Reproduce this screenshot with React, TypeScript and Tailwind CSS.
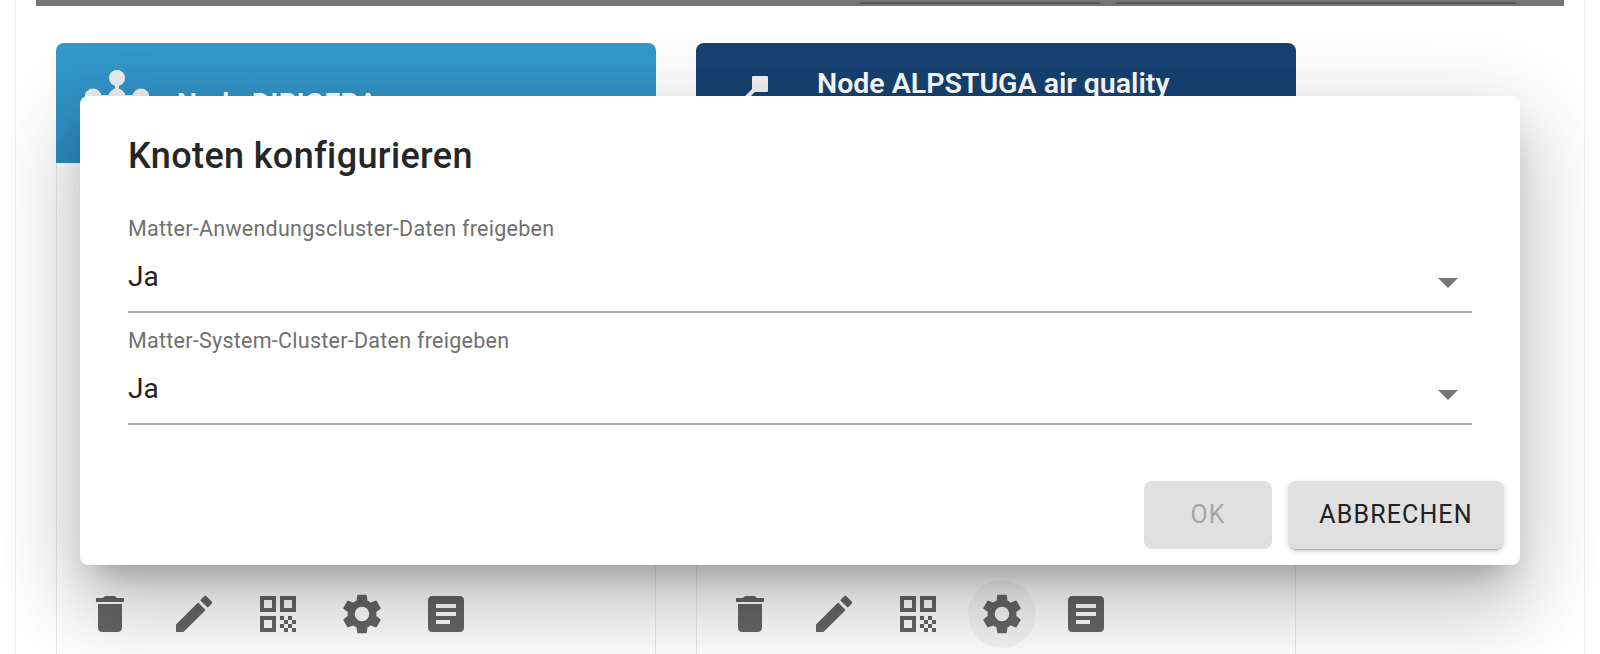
const ICONS = {
  trash: "M6 19c0 1.1.9 2 2 2h8c1.1 0 2-.9 2-2V7H6v12zM19 4h-3.5l-1-1h-5l-1 1H5v2h14V4z",
  pencil:
    "M3 17.25V21h3.75L17.81 9.94l-3.75-3.75L3 17.25zM20.71 7.04c.39-.39.39-1.02 0-1.41l-2.34-2.34a.9959.9959 0 0 0-1.41 0l-1.83 1.83 3.75 3.75 1.83-1.83z",
  qr: "M3 11h8V3H3v8zm2-6h4v4H5V5zM3 21h8v-8H3v8zm2-6h4v4H5v-4zM13 3v8h8V3h-8zm6 6h-4V5h4v4zM13 13h2v2h-2zM15 15h2v2h-2zM13 17h2v2h-2zM15 19h2v2h-2zM17 17h2v2h-2zM19 19h2v2h-2zM17 13h2v2h-2zM19 15h2v2h-2z",
  gear: "M19.14 12.94c.04-.3.06-.61.06-.94 0-.32-.02-.64-.07-.94l2.03-1.58c.18-.14.23-.41.12-.61l-1.92-3.32c-.12-.22-.37-.29-.59-.22l-2.39.96c-.5-.38-1.03-.7-1.62-.94l-.36-2.54c-.04-.24-.24-.41-.48-.41h-3.84c-.24 0-.43.17-.47.41l-.36 2.54c-.59.24-1.13.57-1.62.94l-2.39-.96c-.22-.08-.47 0-.59.22L2.74 8.87c-.12.21-.08.47.12.61l2.03 1.58c-.05.3-.09.63-.09.94s.02.64.07.94l-2.03 1.58c-.18.14-.23.41-.12.61l1.92 3.32c.12.22.37.29.59.22l2.39-.96c.5.38 1.03.7 1.62.94l.36 2.54c.05.24.24.41.48.41h3.84c.24 0 .44-.17.47-.41l.36-2.54c.59-.24 1.13-.56 1.62-.94l2.39.96c.22.08.47 0 .59-.22l1.92-3.32c.12-.22.07-.47-.12-.61l-2.01-1.58zM12 15.6c-1.98 0-3.6-1.62-3.6-3.6s1.62-3.6 3.6-3.6 3.6 1.62 3.6 3.6-1.62 3.6-3.6 3.6z",
  article:
    "M19 3H5c-1.1 0-2 .9-2 2v14c0 1.1.9 2 2 2h14c1.1 0 2-.9 2-2V5c0-1.1-.9-2-2-2zm-5 14H7v-2h7v2zm3-4H7v-2h10v2zm0-4H7V7h10v2z",
};

function ActionIcon({ d, active }: { d: string; active?: boolean }) {
  return (
    <div
      className={
        "flex h-[68px] w-[68px] items-center justify-center rounded-full " +
        (active ? "bg-black/[0.04]" : "")
      }
    >
      <svg viewBox="0 0 24 24" className="h-12 w-12 fill-[#666666]">
        <path d={d} />
      </svg>
    </div>
  );
}

function NodeCard({
  title,
  header,
  titleTop,
  icon,
  activeGear,
}: {
  title: string;
  header: string;
  titleTop: string;
  icon: React.ReactNode;
  activeGear?: boolean;
}) {
  return (
    <div className="flex h-[640px] w-[600px] shrink-0 flex-col rounded-lg border border-[#e8e8e8] bg-white">
      <div className={"-mx-px -mt-px flex h-[120px] gap-7 rounded-t-lg pl-[29px] pt-5 " + header}>
        <div className="h-16 w-16 shrink-0">{icon}</div>
        <div className={"text-[28.5px] font-semibold leading-8 text-white " + titleTop}>{title}</div>
      </div>
      <div className="flex-1" />
      <div className="flex gap-4 pb-[34px] pl-[19px]">
        <ActionIcon d={ICONS.trash} />
        <ActionIcon d={ICONS.pencil} />
        <ActionIcon d={ICONS.qr} />
        <ActionIcon d={ICONS.gear} active={activeGear} />
        <ActionIcon d={ICONS.article} />
      </div>
    </div>
  );
}

function HubIcon() {
  return (
    <svg viewBox="0 0 64 64" className="h-16 w-16 fill-[#eeeeee] stroke-[#eeeeee]">
      <line x1="32" y1="15" x2="32" y2="34" strokeWidth="4" />
      <line x1="8" y1="34" x2="56" y2="34" strokeWidth="4" />
      <circle cx="32" cy="15" r="8" stroke="none" />
      <circle cx="8" cy="34" r="8.5" stroke="none" />
      <circle cx="32" cy="34" r="8.5" stroke="none" />
      <circle cx="56" cy="34" r="8.5" stroke="none" />
    </svg>
  );
}

function SensorIcon() {
  return (
    <svg viewBox="0 0 64 64" className="h-16 w-16 fill-[#f2f2f2] stroke-[#f2f2f2]">
      <rect x="27" y="13" width="16" height="16" rx="1" stroke="none" />
      <line x1="29" y1="27" x2="18" y2="38" strokeWidth="4" />
    </svg>
  );
}

function Field({ label, mt }: { label: string; mt: string }) {
  return (
    <div className={mt}>
      <div className="text-[21.5px] leading-6 tracking-[0.012em] text-[#707070]">{label}</div>
      <div className="flex h-[72px] items-start justify-between border-b-2 border-[#a8a8a8]">
        <span className="mt-5 text-[28px] leading-8 text-[#212121]">Ja</span>
        <svg viewBox="0 0 24 24" className="mt-[17px] h-12 w-12 fill-[#757575]">
          <path d="M7 10l5 5 5-5z" />
        </svg>
      </div>
    </div>
  );
}

export default function App() {
  return (
    <div className="relative h-[654px] overflow-hidden bg-white font-['Roboto',sans-serif]">
      <div className="mx-[15px] h-[654px] border-x border-[#eeeeee] px-5">
        <div className="relative flex h-1.5 justify-end gap-4 bg-[#757575] pr-12">
          <div className="mt-0.5 h-0.5 w-60 bg-[#555555]" />
          <div className="mt-0.5 h-0.5 w-[400px] bg-[#555555]" />
        </div>
        <div className="flex gap-10 pl-5 pt-[37px]">
          <NodeCard
            title="Node DIRIGERA"
            header="bg-gradient-to-b from-[#3399cc] to-[#2e8cc0]"
            titleTop="pt-[25px]"
            icon={<HubIcon />}
          />
          <NodeCard
            title="Node ALPSTUGA air quality"
            header="bg-[#164272]"
            titleTop="pt-[5px]"
            icon={<SensorIcon />}
            activeGear
          />
        </div>
      </div>

      {/* Dialog */}
      <div className="absolute left-20 top-24 flex h-[469px] w-[1440px] flex-col rounded-lg bg-white px-12 pb-4 pt-[38px] shadow-[0_22px_30px_-14px_rgba(0,0,0,0.26),0_48px_76px_6px_rgba(0,0,0,0.13),0_18px_92px_16px_rgba(0,0,0,0.11)]">
        <h2 className="text-[36px] font-medium leading-11 tracking-[0.01em] text-[#262626]">
          Knoten konfigurieren
        </h2>
        <Field label="Matter-Anwendungscluster-Daten freigeben" mt="mt-[39px]" />
        <Field label="Matter-System-Cluster-Daten freigeben" mt="mt-4" />
        <div className="-mr-8 mt-auto flex justify-end gap-4">
          <div className="flex h-[68px] w-[128px] items-center justify-center rounded-lg bg-[#e0e0e0] text-[25px] tracking-[0.04em] text-[#a6a6a6]">
            OK
          </div>
          <div className="flex h-[68px] w-[216px] items-center justify-center rounded-lg bg-[#e0e0e0] text-[25px] tracking-[0.045em] text-[#212121] shadow-[0_3px_2px_-2px_rgba(0,0,0,0.3),0_2px_6px_0_rgba(0,0,0,0.14)]">
            ABBRECHEN
          </div>
        </div>
      </div>
    </div>
  );
}
